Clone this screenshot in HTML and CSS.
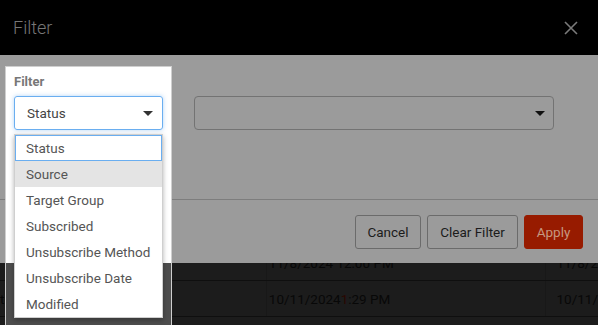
FILE: index.html
```html
<!DOCTYPE html>
<html lang="en">
  <head>
    <meta charset="UTF-8" />
    <meta name="viewport" content="width=device-width, initial-scale=1.0" />
    <title>Filter</title>
    <link rel="stylesheet" href="styles.css">
  </head>
  <body>
    <div class="modal">
      <div class="modal-header">
        <span class="modal-title">Filter</span>
        <svg class="close-icon" width="16" height="16" viewBox="0 0 16 16">
          <path d="M2 2 L14 14 M14 2 L2 14" stroke="#7a7a7a" stroke-width="1.6" fill="none" />
        </svg>
      </div>

      <div class="modal-body">
        <div class="field-spacer"></div>
        <div class="value-select">
          <span class="caret dark"></span>
        </div>
      </div>

      <div class="modal-footer">
        <button class="btn btn-cancel">Cancel</button>
        <button class="btn btn-clear">Clear Filter</button>
        <button class="btn btn-apply">Apply</button>
      </div>
    </div>

    <!-- page table behind the modal -->
    <div class="table-peek">
      <div class="row cut">
        <span class="cell first"></span>
        <span class="cell date">11/8/2024 12:00 PM</span>
        <span class="cell last">11/8/2</span>
      </div>
      <div class="row">
        <span class="cell first">tive</span>
        <span class="cell date">10/11/2024 <b class="red">1</b>:29 PM</span>
        <span class="cell last">10/11/</span>
      </div>
    </div>

    <!-- highlighted filter field with open list -->
    <div class="filter-panel">
      <div class="filter-label">Filter</div>
      <div class="field-select">
        <span>Status</span>
        <span class="caret"></span>
      </div>
      <ul class="option-list">
        <li class="option focused">Status</li>
        <li class="option hovered">Source</li>
        <li class="option">Target Group</li>
        <li class="option">Subscribed</li>
        <li class="option">Unsubscribe Method</li>
        <li class="option">Unsubscribe Date</li>
        <li class="option">Modified</li>
      </ul>
    </div>
  </body>
</html>
```

FILE: styles.css
```css
body {
  margin: 0;
  width: 598px;
  height: 325px;
  overflow: hidden;
  background: #1c1c1c;
  font-family: Roboto, "Liberation Sans", sans-serif;
  position: relative;
}

.modal-header {
  height: 55px;
  background: #000;
  display: flex;
  align-items: center;
  justify-content: space-between;
  padding: 0 19px 0 13px;
}

.modal-title {
  color: #777;
  font-size: 18px;
  font-weight: 300;
}

.modal-body {
  background: #9b9b9b;
  height: 144px;
  display: flex;
  padding: 41px 44px 0 14px;
  box-sizing: border-box;
  gap: 31px;
}

.field-spacer {
  width: 149px;
}

.value-select {
  flex: 1;
  height: 34px;
  box-sizing: border-box;
  border: 1px solid #737373;
  border-radius: 4px;
  display: flex;
  align-items: center;
  justify-content: flex-end;
  padding-right: 8px;
}

.caret {
  width: 0;
  height: 0;
  border-left: 5px solid transparent;
  border-right: 5px solid transparent;
  border-top: 5px solid #333;
}

.caret.dark {
  border-top-color: #111;
}

.modal-footer {
  background: #9b9b9b;
  border-top: 1px solid #7d7d7d;
  height: 64px;
  box-sizing: border-box;
  display: flex;
  justify-content: flex-end;
  align-items: flex-start;
  gap: 6px;
  padding: 15px 15px 0 0;
}

.btn {
  height: 34px;
  padding: 0;
  font-family: inherit;
  font-size: 13.5px;
  color: #1c1c1c;
  background: transparent;
  border: 1px solid #6b6b6b;
  border-radius: 3px;
}

.btn-cancel {
  width: 66px;
}

.btn-clear {
  width: 91px;
}

.btn-apply {
  width: 59px;
  background: #971b00;
  border-color: #971b00;
  color: #c69880;
}

.table-peek {
  height: 62px;
  overflow: hidden;
}

.row {
  display: flex;
  height: 35px;
  align-items: center;
  border-bottom: 1px solid #0f0f0f;
  font-size: 13.5px;
  color: #080808;
}

.row.cut {
  margin-top: -18px;
}

.cell {
  box-sizing: border-box;
  height: 100%;
  display: flex;
  align-items: center;
}

.cell.first {
  width: 271px;
  border-right: 1px solid #181818;
}

.cell.date {
  width: 283px;
  padding-left: 2px;
  border-right: 1px solid #181818;
}

.cell.last {
  padding-left: 11px;
}

.red {
  font-weight: normal;
  color: #2a0700;
}

.filter-panel {
  position: absolute;
  left: 5px;
  top: 66px;
  width: 167px;
  height: 259px;
  box-sizing: border-box;
  border: 1px solid #cfcfcf;
  border-bottom: none;
  background: linear-gradient(#fff 196px, #4d4d4d 196px);
  padding: 7px 8px 0 8px;
}

.filter-label {
  font-size: 13px;
  font-weight: bold;
  color: #777;
  margin-bottom: 7px;
}

.field-select {
  height: 34px;
  box-sizing: border-box;
  border: 1px solid #6aaef0;
  border-radius: 3px;
  box-shadow: 0 0 4px rgba(100, 170, 240, 0.5);
  display: flex;
  align-items: center;
  justify-content: space-between;
  padding: 0 9px 0 12px;
  font-size: 13.5px;
  color: #444;
}

.option-list {
  list-style: none;
  margin: 4px 0 0;
  padding: 0;
  background: #fff;
  border: 1px solid #cfcfcf;
  box-shadow: 0 2px 5px rgba(0, 0, 0, 0.3);
}

.option {
  height: 26px;
  box-sizing: border-box;
  padding-left: 11px;
  display: flex;
  align-items: center;
  font-size: 13.5px;
  color: #555;
}

.option.focused {
  border: 1px solid #6aaef0;
  padding-left: 10px;
}

.option.hovered {
  background: #e4e4e4;
}
```
